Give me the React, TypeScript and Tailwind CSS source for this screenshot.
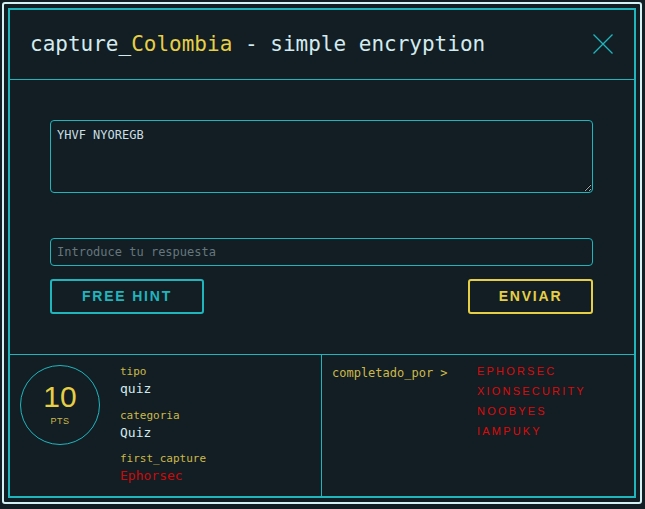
import React, { useState } from 'react';

const mono = "font-['DejaVu_Sans_Mono','Liberation_Mono',monospace]";
const sans = "font-['Liberation_Sans','Noto_Sans',sans-serif]";

const solvers = ['EPHORSEC', 'XIONSECURITY', 'NOOBYES', 'IAMPUKY'];

export default function App() {
  const [answer, setAnswer] = useState('');

  return (
    <div className="w-[645px] h-[509px] bg-[#121e24] pt-[2px] pl-[2px]">
      <div className="w-[640px] h-[502px] border-2 border-[#d4f1f4] rounded-[3px] p-[4px]">
        <div className="h-full border-2 border-[#1fb5bd] flex flex-col">
          {/* header */}
          <div className="h-[70px] flex items-center justify-between pl-5 pr-[21px] border-b border-[#1fb5bd] pb-px">
            <h1 className={`${mono} text-[21px] text-[#d3ebee] leading-none`}>
              capture_<span className="text-[#e6cf45]">Colombia</span> - simple encryption
            </h1>
            <button className="w-5 h-5">
              <svg viewBox="0 0 20 20" className="w-5 h-5" fill="none" stroke="#1fb5bd" strokeWidth="1.3">
                <path d="M0.5 0.5 L19.5 19.5 M19.5 0.5 L0.5 19.5" />
              </svg>
            </button>
          </div>

          {/* body */}
          <div className="h-[274px] pt-10 pl-10 pr-[41px]">
            <textarea
              readOnly
              defaultValue="YHVF NYOREGB"
              className={`${mono} block w-full h-[73px] rounded-[4px] border border-[#1fb5bd] bg-transparent text-[12px] leading-4 text-[#c9dfe2] px-[6px] py-[6px] outline-none resize-y`}
            />
            <input
              value={answer}
              onChange={e => setAnswer(e.target.value)}
              placeholder="Introduce tu respuesta"
              className={`${mono} block w-full h-[28px] mt-[45px] rounded-[4px] border border-[#1fb5bd] bg-transparent text-[12px] text-[#c9dfe2] placeholder:text-[#66767c] px-[6px] outline-none`}
            />
            <div className="flex justify-between mt-[13px]">
              <button className={`${sans} w-[154px] h-[35px] border-2 border-[#1fb5bd] rounded-[3px] text-[#1fb5bd] text-[14px] font-semibold tracking-[1.8px]`}>
                FREE HINT
              </button>
              <button className={`${sans} w-[125px] h-[35px] border-2 border-[#e6cf45] rounded-[3px] text-[#e6cf45] text-[14px] font-semibold tracking-[1.8px]`}>
                ENVIAR
              </button>
            </div>
          </div>

          {/* footer */}
          <div className="flex-1 flex border-t border-[#1fb5bd]">
            <div className="w-[312px] border-r border-[#1fb5bd] flex pl-[10px] pt-[10px]">
              <div className="w-[80px] h-[80px] rounded-full border border-[#1fb5bd] flex flex-col items-center justify-center shrink-0">
                <span className={`${sans} text-[30px] leading-[30px] text-[#e6cf45] font-light`}>10</span>
                <span className={`${sans} text-[9px] text-[#cdb948] mt-[3px] tracking-[0.5px]`}>PTS</span>
              </div>
              <div className={`${mono} ml-5 -mt-px`}>
                <div className="text-[11px] leading-4 text-[#cdb948]">tipo</div>
                <div className="text-[13px] leading-[18px] text-[#d3ebee]">quiz</div>
                <div className="text-[11px] leading-4 text-[#cdb948] mt-[10px]">categoria</div>
                <div className="text-[13px] leading-[18px] text-[#d3ebee]">Quiz</div>
                <div className="text-[11px] leading-4 text-[#cdb948] mt-[9px]">first_capture</div>
                <div className="text-[13px] leading-[18px] text-[#cc0a0a]">Ephorsec</div>
              </div>
            </div>
            <div className="flex-1 flex pl-[10px] pt-[10px]">
              <div className={`${mono} w-[145px] text-[12px] leading-4 text-[#cdb948]`}>completado_por &gt;</div>
              <ul className={`${sans} text-[11px] text-[#dd0a0a] tracking-[2.2px]`}>
                {solvers.map(s => (
                  <li key={s} className="leading-5 -mt-[4px] mb-[4px]">{s}</li>
                ))}
              </ul>
            </div>
          </div>
        </div>
      </div>
    </div>
  );
}
